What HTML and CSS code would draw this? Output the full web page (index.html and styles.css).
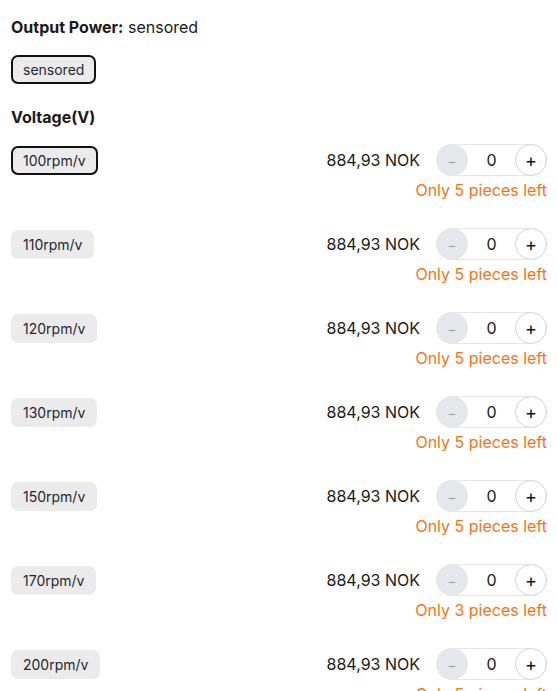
FILE: index.html
```html
<!DOCTYPE html>
<html>
<head>
<meta charset="utf-8">
<link rel="stylesheet" href="styles.css">
</head>
<body>
<div class="wrap">
  <div class="title"><b>Output Power:</b> sensored</div>
  <div class="chips"><span class="chip selected">sensored</span></div>
  <div class="title heading"><b>Voltage(V)</b></div>
  <div class="rows">
    <div class="row">
      <span class="chip selected">100rpm/v</span>
      <div class="right">
        <div class="buy"><span class="price">884,93 NOK</span>
          <div class="stepper"><span class="btn minus">−</span><span class="qty">0</span><span class="btn plus">+</span></div></div>
        <div class="stock">Only 5 pieces left</div>
      </div>
    </div>
    <div class="row">
      <span class="chip">110rpm/v</span>
      <div class="right">
        <div class="buy"><span class="price">884,93 NOK</span>
          <div class="stepper"><span class="btn minus">−</span><span class="qty">0</span><span class="btn plus">+</span></div></div>
        <div class="stock">Only 5 pieces left</div>
      </div>
    </div>
    <div class="row">
      <span class="chip">120rpm/v</span>
      <div class="right">
        <div class="buy"><span class="price">884,93 NOK</span>
          <div class="stepper"><span class="btn minus">−</span><span class="qty">0</span><span class="btn plus">+</span></div></div>
        <div class="stock">Only 5 pieces left</div>
      </div>
    </div>
    <div class="row">
      <span class="chip">130rpm/v</span>
      <div class="right">
        <div class="buy"><span class="price">884,93 NOK</span>
          <div class="stepper"><span class="btn minus">−</span><span class="qty">0</span><span class="btn plus">+</span></div></div>
        <div class="stock">Only 5 pieces left</div>
      </div>
    </div>
    <div class="row">
      <span class="chip">150rpm/v</span>
      <div class="right">
        <div class="buy"><span class="price">884,93 NOK</span>
          <div class="stepper"><span class="btn minus">−</span><span class="qty">0</span><span class="btn plus">+</span></div></div>
        <div class="stock">Only 5 pieces left</div>
      </div>
    </div>
    <div class="row">
      <span class="chip">170rpm/v</span>
      <div class="right">
        <div class="buy"><span class="price">884,93 NOK</span>
          <div class="stepper"><span class="btn minus">−</span><span class="qty">0</span><span class="btn plus">+</span></div></div>
        <div class="stock">Only 3 pieces left</div>
      </div>
    </div>
    <div class="row">
      <span class="chip">200rpm/v</span>
      <div class="right">
        <div class="buy"><span class="price">884,93 NOK</span>
          <div class="stepper"><span class="btn minus">−</span><span class="qty">0</span><span class="btn plus">+</span></div></div>
        <div class="stock">Only 5 pieces left</div>
      </div>
    </div>
  </div>
</div>
</body>
</html>
```
FILE: styles.css
```css
* { box-sizing: border-box; }
html, body { margin: 0; padding: 0; background: #fff; }
body {
  font-family: Inter, "Noto Sans", sans-serif;
  color: #1a1a1a;
  font-size: 16px;
  overflow: hidden;
}
.wrap {
  padding: 15px 10px 0 11px;
}
.title {
  line-height: 24px;
  font-size: 16px;
}
.title b { font-weight: 700; }
.chips { margin-top: 16px; display: flex; }
.heading { margin-top: 21px; }
.chip {
  display: inline-flex;
  align-items: center;
  height: 29px;
  padding: 0 10px;
  border: 2px solid transparent;
  border-radius: 7px;
  background: #ebebeb;
  font-size: 14px;
  color: #1f2633;
}
.chip.selected { border-color: #111; }
.rows {
  margin-top: 15px;
  display: flex;
  flex-direction: column;
  gap: 28px;
}
.row {
  display: flex;
  justify-content: space-between;
  align-items: flex-start;
}
.row .chip { margin-top: 2px; }
.right {
  display: flex;
  flex-direction: column;
  align-items: flex-end;
  gap: 4px;
}
.buy {
  display: flex;
  align-items: center;
  gap: 16px;
}
.price { font-size: 16px; color: #1a1a1a; }
.stepper {
  display: flex;
  align-items: center;
  width: 111px;
  height: 32px;
  border: 1px solid #e5e7eb;
  border-radius: 16px;
}
.btn {
  width: 32px;
  height: 32px;
  margin: -1px;
  border-radius: 50%;
  display: flex;
  align-items: center;
  justify-content: center;
  flex: none;
}
.minus { background: #e5e7eb; color: #9ca3af; font-size: 14px; }
.plus { background: #fff; border: 1px solid #d1d5db; color: #111; font-size: 18px; }
.qty { flex: 1; text-align: center; font-size: 16px; color: #1a1a1a; }
.stock {
  color: #f97316;
  font-size: 16px;
  line-height: 20px;
}
```
